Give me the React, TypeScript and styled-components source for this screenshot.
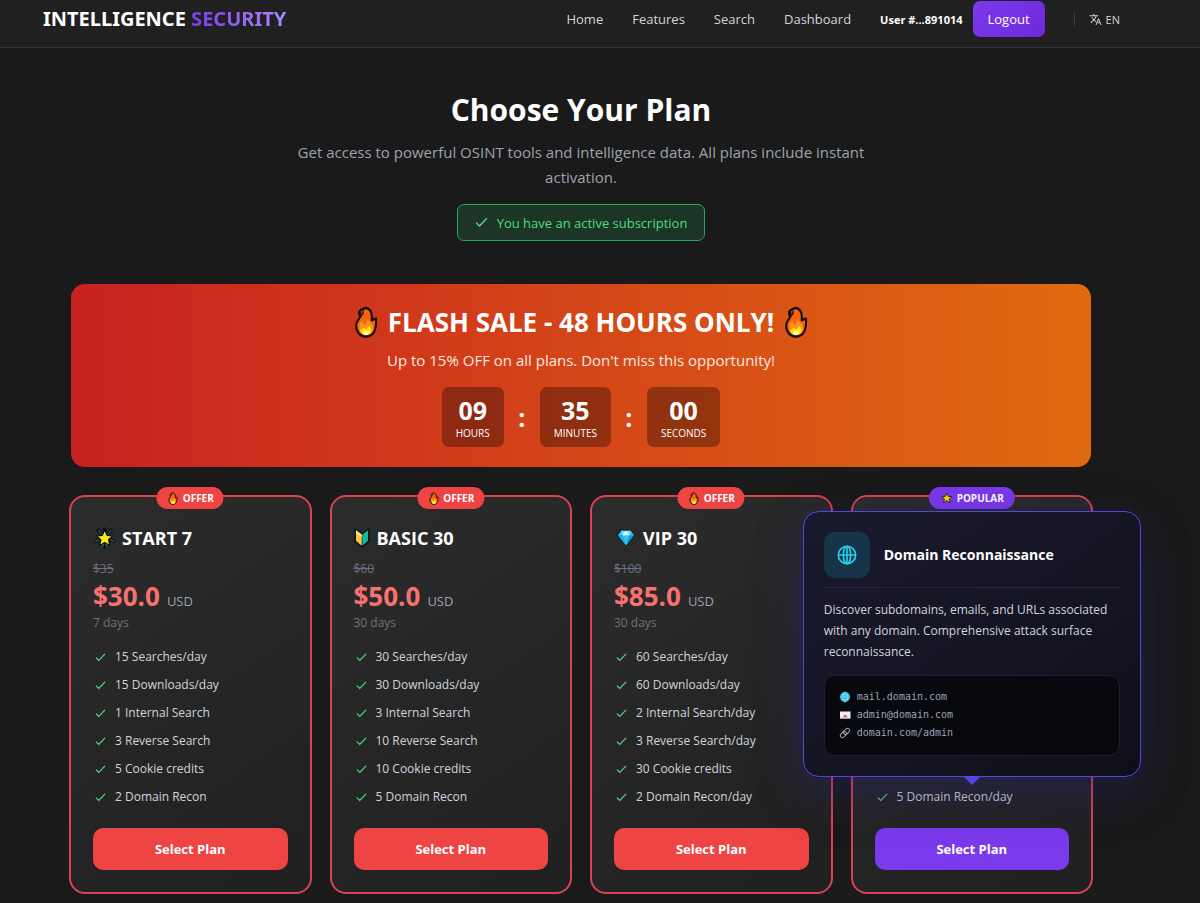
import React from "react";
import styled, { createGlobalStyle } from "styled-components";

const GlobalStyle = createGlobalStyle`
  *, *::before, *::after { box-sizing: border-box; }
  body {
    margin: 0;
    background: #1a1a1a;
    color: #fff;
    font-family: "Segoe UI", "Open Sans", "Noto Sans", sans-serif;
    font-size: 13px;
  }
  button { font-family: inherit; cursor: pointer; }
  h1, h2, h3, h4, p, ul { margin: 0; padding: 0; }
  ul { list-style: none; }
`;

/* ---------- icons ---------- */

const Check = ({ size = 11 }: { size?: number }) => (
  <svg width={size} height={size} viewBox="0 0 12 12" fill="none" stroke="#4ade80" strokeWidth="1.3" aria-hidden="true">
    <path d="M1 6.2 L4.1 9.2 L11 2" />
  </svg>
);

const Fire = ({ size }: { size: number }) => (
  <svg width={size} height={size} viewBox="0 0 32 32" aria-hidden="true">
    <g transform="translate(2.4 0) scale(0.86 1)">
      <path
        d="M13.2 2.6C16 1 20.6 3 22 7C22.8 10 23 11.5 22.4 14.2C23.6 13.8 25 13 27.4 12.6C27.6 14.5 27.8 16.5 27.3 19.5C26.6 26 22.5 30.6 16 30.6C9 30.6 4.2 25.5 4.4 19.5C4.6 15.5 7 13.6 9.6 10.2C7.2 9.4 7 6 9.1 4.6C10.2 3.7 11.8 3.4 13.2 2.6Z"
        fill="#f7630c"
        stroke="#111"
        strokeWidth="2.4"
        strokeLinejoin="round"
      />
      <path d="M9.7 5.9C8.8 7.6 9.8 9.4 11.3 8.8C12.8 7.6 13 5.3 12.1 4.8" fill="#d83b01" stroke="#111" strokeWidth="1.4" />
      <path d="M8 21C8 18 9.8 15.8 11.8 14C11.6 16.5 12.8 18.5 14.8 18.8C16.8 17 16.3 14.4 18.3 13.2C18.6 16 22.6 16.7 24 20C25.3 25.5 21.5 29 16.3 29C11.5 29 8 25.7 8 21Z" fill="#ff8f1c" />
      <path d="M9 24C10.5 24.2 12.3 23 12.7 21.8C14.2 21.8 15.1 22.8 15.7 23.4C17.5 22.4 18.8 21.2 19 19.7C21 20.8 22.8 22.8 21.8 25.4C20.8 28 18.5 29 16 29C12.3 29 9.4 27 9 24Z" fill="#ffe600" />
      <path d="M12.5 26.5L14.8 24.5L17 26L19 24.6C20 27 18 29 16 29C14 29 12.7 28 12.5 26.5Z" fill="#fffbd0" />
    </g>
  </svg>
);

const STAR = "M16 4.5L19.4 12.2L27.8 13L21.5 18.5L23.4 26.7L16 22.4L8.6 26.7L10.5 18.5L4.2 13L12.6 12.2Z";

const GlowStar = () => (
  <svg width="22" height="22" viewBox="-1 0 32 32" aria-hidden="true">
    <g stroke="#111" strokeWidth="5" strokeLinecap="round">
      <path d="M7 5L12 11M25 5L20 11M16 28V29M3 21L7 19M29 21L25 19M16 3V6" />
    </g>
    <g stroke="#1b8fb3" strokeWidth="1.4" strokeLinecap="round">
      <path d="M7 5L11 10M25 5L21 10M3 21L7 19M29 21L25 19M13 28L14 25M19 28L18 25" />
    </g>
    <path d={STAR} fill="#ffe81a" stroke="#111" strokeWidth="1.6" strokeLinejoin="round" />
  </svg>
);

const SmallStar = () => (
  <svg width="14" height="14" viewBox="0 0 32 32" aria-hidden="true">
    <path d={STAR} fill="#fcd700" stroke="#2a1c1c" strokeWidth="2" strokeLinejoin="round" />
  </svg>
);

const Beginner = () => (
  <svg width="16" height="20" viewBox="0 0 16 20" aria-hidden="true">
    <path d="M1.5 1.5L8 6.2L14.5 1.5V13L8 18.8L1.5 13Z" fill="#111" stroke="#111" strokeWidth="2" strokeLinejoin="round" />
    <path d="M2 2.2L7.7 6.6V17.8L2 12.8Z" fill="#ffc83d" />
    <path d="M14 2.2L8.3 6.6V17.8L14 12.8Z" fill="#14b8a0" />
    <path d="M2 2.2L7.7 6.6V9L2 5Z" fill="#ffe29a" />
  </svg>
);

const Gem = () => (
  <svg width="22" height="20" viewBox="-2 0 22 20" aria-hidden="true">
    <path d="M5 2.2H15L18.8 7.2L10 18.4L1.2 7.2Z" fill="#31c4f5" stroke="#10222c" strokeWidth="1.2" strokeLinejoin="round" />
    <path d="M5 2.8H15L13.6 7.2H6.4Z" fill="#75dcff" />
    <path d="M10 2.8L13.6 7.2H6.4Z" fill="#f0fbff" />
    <path d="M1.9 7.2H6.4L10 17.4Z" fill="#1ca5e4" />
    <path d="M18.1 7.2H13.6L10 17.4Z" fill="#1490d2" />
  </svg>
);

const Globe = () => (
  <svg width="22" height="22" viewBox="0 0 24 24" fill="none" stroke="#22d3ee" strokeWidth="1.8" aria-hidden="true">
    <circle cx="12" cy="12" r="9.5" />
    <ellipse cx="12" cy="12" rx="4" ry="9.5" />
    <path d="M2.5 12H21.5M12 2.5V21.5" />
  </svg>
);

const Translate = () => (
  <svg width="13" height="13" viewBox="0 0 24 24" fill="#c8ccd2" aria-hidden="true">
    <path d="M12.87 15.07l-2.54-2.51.03-.03A17.5 17.5 0 0 0 14.07 6H17V4h-7V2H8v2H1v2h11.17C11.5 7.92 10.44 9.75 9 11.35 8.07 10.32 7.3 9.19 6.69 8h-2c.73 1.63 1.73 3.17 2.98 4.56l-5.09 5.02L4 19l5-5 3.11 3.11.76-2.04zM18.5 10h-2L12 22h2l1.12-3h4.75L21 22h2l-4.5-12zm-2.62 7l1.62-4.33L19.12 17h-3.24z" />
  </svg>
);

const TinyGlobe = () => (
  <svg width="12" height="12" viewBox="0 0 12 12" aria-hidden="true">
    <circle cx="6" cy="6" r="5" fill="#25bfe8" />
    <path d="M1 6H11M6 1V11M2 3.5H10M2 8.5H10" stroke="#8be6fa" strokeWidth=".6" />
    <ellipse cx="6" cy="6" rx="2.5" ry="5" fill="none" stroke="#8be6fa" strokeWidth=".6" />
  </svg>
);

const TinyMail = () => (
  <svg width="12" height="12" viewBox="0 0 12 12" aria-hidden="true">
    <rect x="1" y="2.5" width="10.5" height="7" fill="#f3eef0" />
    <path d="M1 9.5L5 6.2L6.2 7L7.5 6.2L11.5 9.5Z" fill="#d9cdd2" />
    <path d="M5 6.3L6.2 5.8L7.4 6.3V8.2H5Z" fill="#d9606a" />
  </svg>
);

const TinyLink = () => (
  <svg width="12" height="12" viewBox="0 0 12 12" fill="none" stroke="#a8a8a0" strokeWidth="1" aria-hidden="true">
    <rect x="-3.4" y="-2.1" width="6.8" height="4.2" rx="2.1" transform="translate(7.6 4.4) rotate(-45)" />
    <rect x="-3.4" y="-2.1" width="6.8" height="4.2" rx="2.1" transform="translate(4.4 7.6) rotate(-45)" />
  </svg>
);

/* ---------- page frame ---------- */

const Page = styled.div`
  min-height: 100vh;
  padding-bottom: 10px;
`;

const Header = styled.header`
  background: #202020;
  border-bottom: 1px solid #333;
  padding: 1px 80px 10px 43px;
  display: flex;
  align-items: center;
  justify-content: space-between;
`;

const Logo = styled.a`
  font-family: "Segoe UI", "Noto Sans", sans-serif;
  font-size: 20px;
  line-height: 28px;
  font-weight: 700;
  color: #fff;
  text-decoration: none;
  white-space: nowrap;

  span {
    background: linear-gradient(90deg, #7c3aed, #a78bfa);
    -webkit-background-clip: text;
    background-clip: text;
    color: transparent;
  }
`;

const Nav = styled.nav`
  display: flex;
  align-items: center;
  white-space: nowrap;
`;

const NavLinks = styled.div`
  display: flex;
  gap: 29px;
  margin-right: 29px;
`;

const NavLink = styled.a`
  color: #d1d5db;
  font-size: 13px;
  text-decoration: none;
`;

const UserName = styled.span`
  font-size: 11px;
  font-weight: 700;
  margin-right: 10px;
`;

const Logout = styled.button`
  height: 36px;
  padding: 0 15px;
  border: 0;
  border-radius: 7px;
  background: linear-gradient(135deg, #7c3aed, #6d28d9);
  color: #fff;
  font-size: 13px;
`;

const Language = styled.div`
  margin-left: 29px;
  padding-left: 14px;
  border-left: 1px solid #3a3d42;
  display: flex;
`;

const LanguageButton = styled.button`
  display: flex;
  align-items: center;
  gap: 4px;
  padding: 0;
  height: 14px;
  border: 0;
  background: none;
  color: #d1d5db;
  font-size: 11px;
`;

/* The scrolled page leaves a gutter along its right edge. */
const Gutter = styled.div`
  padding-right: 38px;
`;

const Main = styled.main`
  max-width: 1072px;
  margin: 0 auto;
  padding: 42px 24px 0;
`;

/* ---------- intro ---------- */

const Intro = styled.section`
  display: flex;
  flex-direction: column;
  align-items: center;
  text-align: center;
`;

const Title = styled.h1`
  font-size: 30px;
  line-height: 40px;
  font-weight: 700;
`;

const Lead = styled.p`
  max-width: 600px;
  margin-top: 10px;
  font-size: 15px;
  line-height: 25px;
  color: #9ca3af;
`;

const ActiveNotice = styled.div`
  display: flex;
  align-items: center;
  gap: 9px;
  height: 37px;
  margin-top: 14px;
  padding: 0 17px;
  border: 1px solid #22a85a;
  border-radius: 7px;
  background: #1c3526;
  color: #4ade80;
  font-size: 13px;
`;

/* ---------- flash sale ---------- */

const Sale = styled.section`
  margin: 43px 2px 28px;
  padding: 20px;
  border-radius: 14px;
  background: linear-gradient(90deg, #c82121, #e06a10);
  display: flex;
  flex-direction: column;
  align-items: center;
  text-align: center;
`;

const SaleTitle = styled.h2`
  display: flex;
  align-items: center;
  gap: 6px;
  font-size: 26px;
  line-height: 36px;
  font-weight: 700;
`;

const SaleText = styled.p`
  margin-top: 8px;
  font-size: 15px;
  line-height: 24px;
  color: #fce9e0;
`;

const Countdown = styled.div`
  display: flex;
  margin-top: 15px;
`;

const TimeBox = styled.div`
  height: 60px;
  padding: 7px 14px 0;
  border-radius: 7px;
  background: rgba(0, 0, 0, 0.32);

  strong {
    display: block;
    font-size: 25px;
    line-height: 32px;
  }
  span {
    display: block;
    font-size: 10px;
    line-height: 14px;
    text-transform: uppercase;
  }
`;

const Colon = styled.span`
  width: 36px;
  font-size: 25px;
  line-height: 60px;
  font-weight: 700;
`;

/* ---------- plans ---------- */

const Plans = styled.section`
  display: grid;
  grid-template-columns: repeat(4, minmax(0, 1fr));
  gap: 18px;
`;

const Card = styled.article`
  position: relative;
  display: flex;
  flex-direction: column;
  padding: 25px 22px 22px;
  border: 2px solid #d9434f;
  border-radius: 16px;
  background: linear-gradient(145deg, #2c2c2c, #202020);
`;

const Badge = styled.span<{ $popular?: boolean }>`
  position: absolute;
  top: -10px;
  left: 50%;
  transform: translateX(-50%);
  display: flex;
  align-items: center;
  gap: 3px;
  height: 22px;
  padding: 0 ${(p) => (p.$popular ? 11 : 10)}px;
  border-radius: 11px;
  background: ${(p) => (p.$popular ? "#7c3aed" : "#ef4444")};
  font-size: 10px;
  font-weight: 700;
  white-space: nowrap;
`;

const PlanName = styled.h3`
  display: flex;
  align-items: center;
  gap: 7px;
  font-size: 18px;
  line-height: 32px;
  font-weight: 700;
`;

const OldPrice = styled.s`
  margin-top: 6px;
  font-size: 12px;
  line-height: 18px;
  color: #6b7280;
`;

const Price = styled.p`
  font-size: 26px;
  line-height: 36px;
  font-weight: 700;
  color: #f87171;

  small {
    margin-left: 7px;
    font-size: 13px;
    line-height: 16px;
    font-weight: 400;
    color: #9ca3af;
  }
`;

const Period = styled.p`
  font-size: 12px;
  line-height: 18px;
  color: #6b7280;
`;

const Features = styled.ul`
  margin-top: auto;
  padding-top: 15px;
  display: grid;
  gap: 8px;
`;

const Feature = styled.li`
  position: relative;
  display: flex;
  align-items: center;
  gap: 9px;
  padding-left: 2px;
  font-size: 12px;
  line-height: 20px;
  color: #d1d5db;
`;

const Select = styled.button<{ $popular?: boolean }>`
  height: 42px;
  margin-top: 21px;
  border: 0;
  border-radius: 10px;
  background: ${(p) => (p.$popular ? "#7c3aed" : "#ef4444")};
  color: #fff;
  font-size: 13px;
  font-weight: 700;
`;

/* ---------- tooltip ---------- */

const Tooltip = styled.div`
  position: absolute;
  z-index: 2;
  left: 50%;
  bottom: calc(100% + 10px);
  transform: translateX(-50%);
  width: 338px;
  padding: 20px;
  border: 1px solid #4f46e5;
  border-radius: 16px;
  background: linear-gradient(145deg, #1a1a2e, #0f0f1a);
  box-shadow: 0 16px 50px rgba(60, 50, 190, 0.26), 0 16px 60px rgba(0, 0, 0, 0.15);

  &::after {
    content: "";
    position: absolute;
    top: 100%;
    left: 50%;
    transform: translateX(-50%);
    border: 9px solid transparent;
    border-top-color: #4f46e5;
    border-bottom: 0;
  }
`;

const TipHead = styled.div`
  display: flex;
  align-items: center;
  gap: 14px;
  padding-bottom: 9px;
  border-bottom: 1px solid #27244a;
`;

const TipIcon = styled.span`
  display: grid;
  place-items: center;
  width: 46px;
  height: 46px;
  border-radius: 11px;
  background: #173449;
`;

const TipTitle = styled.h4`
  font-size: 14px;
  font-weight: 700;
  color: #fff;
`;

const TipText = styled.p`
  margin-top: 11px;
  font-size: 12px;
  line-height: 21px;
`;

const TipCode = styled.ul`
  margin-top: 13px;
  padding: 12px 14px 13px;
  border: 1px solid #1f1f2b;
  border-radius: 11px;
  background: #08080f;
  color: #9ca3af;
  font-family: "DejaVu Sans Mono", monospace;
  font-size: 10px;
  line-height: 18px;

  li {
    display: flex;
    align-items: center;
    gap: 6px;
  }
`;

const DomainTooltip = () => (
  <Tooltip role="tooltip" id="domain-tip">
    <TipHead>
      <TipIcon>
        <Globe />
      </TipIcon>
      <TipTitle>Domain Reconnaissance</TipTitle>
    </TipHead>
    <TipText>
      Discover subdomains, emails, and URLs associated
      <br />
      with any domain. Comprehensive attack surface
      <br />
      reconnaissance.
    </TipText>
    <TipCode>
      <li>
        <TinyGlobe />
        mail.domain.com
      </li>
      <li>
        <TinyMail />
        admin@domain.com
      </li>
      <li>
        <TinyLink />
        domain.com/admin
      </li>
    </TipCode>
  </Tooltip>
);

/* ---------- data ---------- */

type Plan = {
  name: string;
  icon: React.ReactNode;
  oldPrice: string;
  price: string;
  period: string;
  features: string[];
};

const plans: Plan[] = [
  {
    name: "START 7",
    icon: <GlowStar />,
    oldPrice: "$35",
    price: "$30.0",
    period: "7 days",
    features: ["15 Searches/day", "15 Downloads/day", "1 Internal Search", "3 Reverse Search", "5 Cookie credits", "2 Domain Recon"],
  },
  {
    name: "BASIC 30",
    icon: <Beginner />,
    oldPrice: "$60",
    price: "$50.0",
    period: "30 days",
    features: ["30 Searches/day", "30 Downloads/day", "3 Internal Search", "10 Reverse Search", "10 Cookie credits", "5 Domain Recon"],
  },
  {
    name: "VIP 30",
    icon: <Gem />,
    oldPrice: "$100",
    price: "$85.0",
    period: "30 days",
    features: ["60 Searches/day", "60 Downloads/day", "2 Internal Search/day", "3 Reverse Search/day", "30 Cookie credits", "2 Domain Recon/day"],
  },
];

const times = [
  ["09", "Hours"],
  ["35", "Minutes"],
  ["00", "Seconds"],
];

export default function App() {
  return (
    <Page>
      <GlobalStyle />
      <Header>
        <Logo href="#">
          INTELLIGENCE <span>SECURITY</span>
        </Logo>
        <Nav>
          <NavLinks>
            {["Home", "Features", "Search", "Dashboard"].map((label) => (
              <NavLink key={label} href="#">
                {label}
              </NavLink>
            ))}
          </NavLinks>
          <UserName>User #...891014</UserName>
          <Logout type="button">Logout</Logout>
          <Language>
            <LanguageButton type="button">
              <Translate />
              EN
            </LanguageButton>
          </Language>
        </Nav>
      </Header>

      <Gutter>
        <Main>
          <Intro>
            <Title>Choose Your Plan</Title>
            <Lead>Get access to powerful OSINT tools and intelligence data. All plans include instant activation.</Lead>
            <ActiveNotice>
              <Check size={13} />
              You have an active subscription
            </ActiveNotice>
          </Intro>

          <Sale>
            <SaleTitle>
              <Fire size={32} />
              FLASH SALE - 48 HOURS ONLY!
              <Fire size={32} />
            </SaleTitle>
            <SaleText>Up to 15% OFF on all plans. Don't miss this opportunity!</SaleText>
            <Countdown>
              {times.map(([value, unit], i) => (
                <React.Fragment key={unit}>
                  {i > 0 && <Colon>:</Colon>}
                  <TimeBox>
                    <strong>{value}</strong>
                    <span>{unit}</span>
                  </TimeBox>
                </React.Fragment>
              ))}
            </Countdown>
          </Sale>

          <Plans>
            {plans.map((plan) => (
              <Card key={plan.name}>
                <Badge>
                  <Fire size={13} />
                  OFFER
                </Badge>
                <PlanName>
                  {plan.icon}
                  {plan.name}
                </PlanName>
                <OldPrice>{plan.oldPrice}</OldPrice>
                <Price>
                  {plan.price}
                  <small>USD</small>
                </Price>
                <Period>{plan.period}</Period>
                <Features>
                  {plan.features.map((feature) => (
                    <Feature key={feature}>
                      <Check />
                      {feature}
                    </Feature>
                  ))}
                </Features>
                <Select type="button">Select Plan</Select>
              </Card>
            ))}
            <Card>
              <Badge $popular>
                <SmallStar />
                POPULAR
              </Badge>
              <Features>
                <Feature aria-describedby="domain-tip">
                  <Check />
                  5 Domain Recon/day
                  <DomainTooltip />
                </Feature>
              </Features>
              <Select type="button" $popular>
                Select Plan
              </Select>
            </Card>
          </Plans>
        </Main>
      </Gutter>
    </Page>
  );
}
